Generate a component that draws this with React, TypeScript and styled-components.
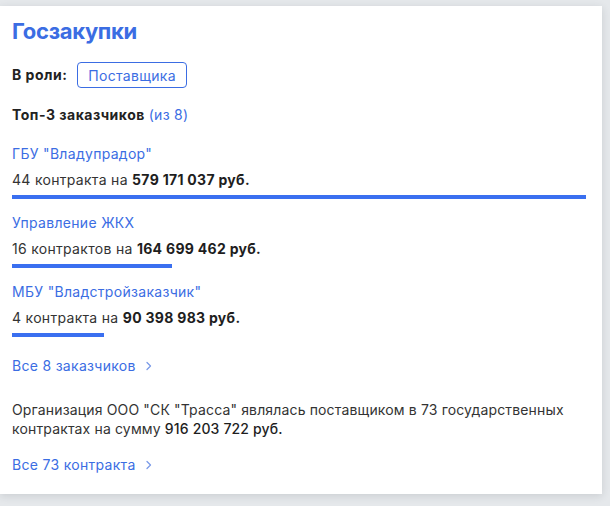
import styled, { createGlobalStyle } from "styled-components";

const GlobalStyle = createGlobalStyle`
  html, body {
    margin: 0;
    background: #e5e8eb;
  }
  body {
    font-family: Inter, "Noto Sans", sans-serif;
    color: #333;
  }
`;

const Page = styled.div`
  padding: 6px 8px 13px 0;
`;

const Card = styled.section`
  background: #fff;
  box-shadow: 0 2px 8px rgba(40, 50, 60, 0.14);
  padding: 11px 16px 19px 12px;
`;

const Title = styled.h2`
  margin: 0;
  font-size: 22px;
  line-height: 28px;
  font-weight: 700;
  letter-spacing: -0.3px;
  color: #3b6de3;
`;

const RoleRow = styled.div`
  display: flex;
  align-items: center;
  gap: 10px;
  margin-top: 17px;
`;

const Label = styled.span`
  font-size: 14px;
  line-height: 20px;
  font-weight: 700;
  letter-spacing: 0.5px;
  color: #222;
`;

const Badge = styled.span`
  display: inline-flex;
  align-items: center;
  height: 26px;
  box-sizing: border-box;
  padding: 0 10px;
  border: 1px solid #3b6de3;
  border-radius: 4px;
  font-size: 14px;
  letter-spacing: 0.3px;
  color: #3b6de3;
`;

const Heading = styled.div`
  margin-top: 17px;
  font-size: 14px;
  line-height: 20px;
  font-weight: 700;
  letter-spacing: 0.5px;
  color: #222;
`;

const Muted = styled.span`
  font-weight: 400;
  letter-spacing: 0.3px;
  color: #3b6de3;
`;

const List = styled.div`
  display: flex;
  flex-direction: column;
  gap: 14px;
  margin-top: 19px;
`;

const Item = styled.div`
  display: flex;
  flex-direction: column;
`;

const Link = styled.a`
  font-size: 14px;
  line-height: 20px;
  letter-spacing: 0.3px;
  color: #3b6de3;
  text-decoration: none;
  display: inline-flex;
  align-items: center;
  gap: 10px;
  align-self: flex-start;
`;

const Amount = styled.div`
  margin-top: 6px;
  font-size: 14px;
  line-height: 20px;
  letter-spacing: 0.3px;
  color: #333;

  b {
    font-weight: 700;
    color: #1e1e1e;
  }
`;

const Bar = styled.div`
  margin-top: 5px;
  height: 4px;
  background: #3a6ff0;
`;

const MoreLink = styled(Link)<{ $gap: number }>`
  margin-top: ${(p) => p.$gap}px;
`;

const Note = styled.p`
  margin: 24px 0 0;
  font-size: 14px;
  line-height: 19px;
  letter-spacing: 0.15px;
  color: #333;

  strong {
    font-weight: 500;
    color: #1e1e1e;
  }
`;

const Chevron = () => (
  <svg width="6" height="10" viewBox="0 0 6 10" fill="none">
    <path d="M1 1.5L4.5 5L1 8.5" stroke="#7b9be8" strokeWidth="1.3" strokeLinecap="round" strokeLinejoin="round" />
  </svg>
);

const customers = [
  { name: 'ГБУ "Владупрадор"', count: "44 контракта", sum: "579 171 037 руб.", share: 100 },
  { name: "Управление ЖКХ", count: "16 контрактов", sum: "164 699 462 руб.", share: 27.9 },
  { name: 'МБУ "Владстройзаказчик"', count: "4 контракта", sum: "90 398 983 руб.", share: 16 },
];

export default function App() {
  return (
    <>
      <GlobalStyle />
      <Page>
        <Card>
          <Title>Госзакупки</Title>
          <RoleRow>
            <Label>В роли:</Label>
            <Badge>Поставщика</Badge>
          </RoleRow>
          <Heading>
            Топ-3 заказчиков <Muted>(из 8)</Muted>
          </Heading>
          <List>
            {customers.map((c) => (
              <Item key={c.name}>
                <Link href="#">{c.name}</Link>
                <Amount>
                  {c.count} на <b>{c.sum}</b>
                </Amount>
                <Bar style={{ width: `${c.share}%` }} />
              </Item>
            ))}
          </List>
          <MoreLink href="#" $gap={19}>
            Все 8 заказчиков <Chevron />
          </MoreLink>
          <Note>
            Организация ООО "СК "Трасса" являлась поставщиком в 73 государственных контрактах на сумму{" "}
            <strong>916 203 722 руб.</strong>
          </Note>
          <MoreLink href="#" $gap={17}>
            Все 73 контракта <Chevron />
          </MoreLink>
        </Card>
      </Page>
    </>
  );
}
